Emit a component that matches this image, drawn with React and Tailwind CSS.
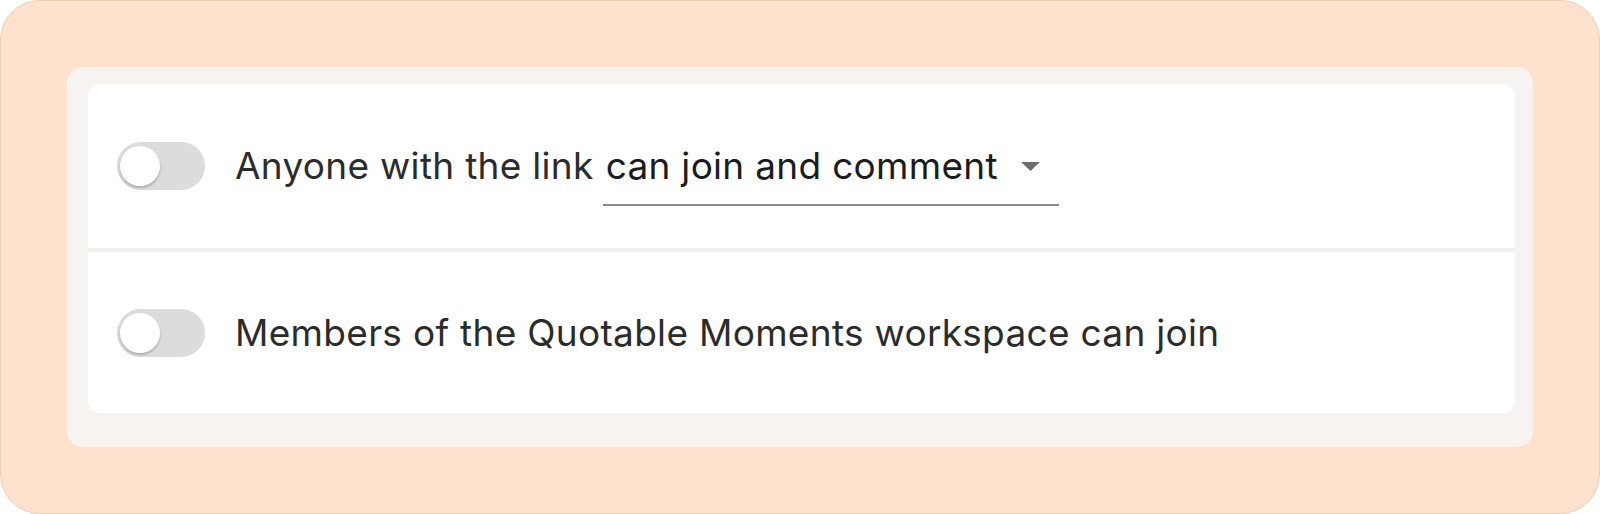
import React from 'react'

function Toggle() {
  return (
    <div className="relative w-[88px] h-[48px] shrink-0 rounded-full bg-[#dcdcdc]">
      <div className="absolute left-[3px] top-[4px] w-[40px] h-[40px] rounded-full bg-white shadow-[0_2px_3px_rgba(0,0,0,0.22)]" />
    </div>
  )
}

export default function App() {
  return (
    <div className="w-[1600px] h-[514px] bg-white" style={{ fontFamily: 'Inter, "Noto Sans", sans-serif' }}>
      <div className="w-full h-full rounded-[40px] border border-[#efccb2] bg-[#fee2ce] p-[66px]">
        <div className="h-full rounded-[16px] bg-[#f6f3f0] pt-[17px] pl-[21px] pr-[18px] pb-[34px]">
          <div className="h-full rounded-[12px] bg-white flex flex-col">
            <div className="h-[164px] flex items-center pl-[29px]">
              <Toggle />
              <span className="ml-[30px] text-[37px] text-[#2b2b2b] tracking-[0.3px]">Anyone with the link</span>
              <div className="ml-[9px] relative flex items-center h-[62px] border-b-2 border-[#8a8a8a] pl-[3px] pr-[18px] mt-[18px]">
                <span className="text-[37px] text-[#1c1c1c] tracking-[0.3px] -mt-[16px]">can join and comment</span>
                <svg className="ml-[22px] -mt-[16px]" width="21" height="11" viewBox="0 0 21 11">
                  <path d="M1 1 L20 1 L10.5 10 Z" fill="#6e6e6e" />
                </svg>
              </div>
            </div>
            <div className="h-[4px] bg-[#f4f2ef]" />
            <div className="flex-1 flex items-center pl-[29px]">
              <Toggle />
              <span className="ml-[30px] text-[37px] text-[#2b2b2b] tracking-[0.3px]">Members of the Quotable Moments workspace can join</span>
            </div>
          </div>
        </div>
      </div>
    </div>
  )
}
